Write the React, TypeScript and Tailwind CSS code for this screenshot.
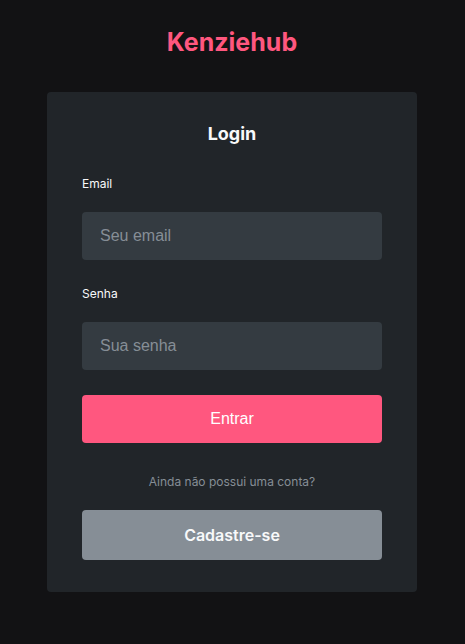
export default function App() {
  return (
    <div className="min-h-[644px] w-full bg-[#121214] pr-px flex flex-col items-center font-['Inter',sans-serif]">
      <h1 className="mt-[28px] text-[25px] leading-[29px] font-bold text-[#FF577F]">Kenziehub</h1>
      <form
        className="mt-[35px] w-[370px] rounded bg-[#212529] px-[35px] pt-[31px] pb-[32px] flex flex-col"
        onSubmit={(e) => e.preventDefault()}
      >
        <h2 className="text-center text-[18px] leading-[22px] font-bold text-[#F8F9FA]">Login</h2>

        <label className="mt-[31px] text-[12px] leading-[15px] text-[#F8F9FA]">Email</label>
        <input
          type="email"
          placeholder="Seu email"
          className="mt-[21px] h-[48px] w-full rounded bg-[#343B41] px-[18px] text-[16px] text-[#F8F9FA] placeholder:text-[#868E96] outline-none font-['Liberation_Sans',Arial,sans-serif]"
        />

        <label className="mt-[26px] text-[12px] leading-[15px] text-[#F8F9FA]">Senha</label>
        <input
          type="password"
          placeholder="Sua senha"
          className="mt-[21px] h-[48px] w-full rounded bg-[#343B41] px-[18px] text-[16px] text-[#F8F9FA] placeholder:text-[#868E96] outline-none font-['Liberation_Sans',Arial,sans-serif]"
        />

        <button
          type="submit"
          className="mt-[25px] h-[48px] w-full rounded bg-[#FF577F] text-[16px] text-white font-['Liberation_Sans',Arial,sans-serif]"
        >
          Entrar
        </button>

        <span className="mt-[31px] text-center text-[12px] leading-[15px] text-[#868E96]">
          Ainda não possui uma conta?
        </span>

        <button
          type="button"
          className="mt-[21px] h-[50px] w-full rounded bg-[#868E96] text-[16px] font-semibold text-[#F8F9FA]"
        >
          Cadastre-se
        </button>
      </form>
    </div>
  );
}
